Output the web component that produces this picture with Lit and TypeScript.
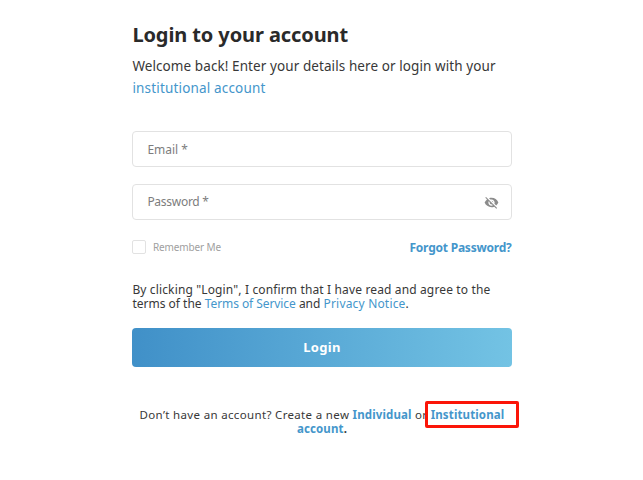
import { LitElement, html, css, svg } from "lit";
import { customElement } from "lit/decorators.js";

const eyeOff = svg`<path d="M12 7c2.76 0 5 2.24 5 5 0 .65-.13 1.26-.36 1.83l2.92 2.92c1.51-1.26 2.7-2.89 3.43-4.75-1.73-4.39-6-7.5-11-7.5-1.4 0-2.74.25-3.98.7l2.16 2.16C10.74 7.13 11.35 7 12 7zM2 4.27l2.28 2.28.46.46C3.08 8.3 1.78 10.02 1 12c1.73 4.39 6 7.5 11 7.5 1.55 0 3.03-.3 4.38-.84l.42.42L19.73 22 21 20.73 3.27 3 2 4.27zM7.53 9.8l1.55 1.55c-.05.21-.08.43-.08.65 0 1.66 1.34 3 3 3 .22 0 .44-.03.65-.08l1.55 1.55c-.67.33-1.41.53-2.2.53-2.76 0-5-2.24-5-5 0-.79.2-1.53.53-2.2zm4.31-.78l3.15 3.15.02-.16c0-1.66-1.34-3-3-3l-.17.01z"/>`;

@customElement("app-root")
export class AppRoot extends LitElement {
  static styles = css`
    :host {
      display: block;
      box-sizing: border-box;
      height: 480px;
      overflow: hidden;
      padding: 21px 0 0 132.4px;
      background: #fff;
      color: #383838;
      font-family: "Noto Sans", "Open Sans", sans-serif;
    }
    .panel { width: 379.2px; }
    h1, p { margin: 0; white-space: nowrap; }
    h1 {
      font-size: 20px;
      line-height: 28px;
      font-weight: 700;
      letter-spacing: -0.1px;
      color: #2a2a2a;
    }
    a { color: #4496cb; text-decoration: none; }
    .intro {
      margin-top: 6px;
      font-size: 13.5px;
      line-height: 22px;
      letter-spacing: 0.085px;
    }
    .intro a { letter-spacing: 0.17px; }
    .field {
      box-sizing: border-box;
      height: 36px;
      border: 1px solid #e2e2e2;
      border-radius: 4px;
      padding: 0 12px 0 14px;
      display: flex;
      align-items: center;
      justify-content: space-between;
      font-size: 12px;
      line-height: 16px;
      color: #7d7d7d;
    }
    .email { margin-top: 32px; padding-top: 1px; }
    .password { margin-top: 17px; letter-spacing: -0.28px; }
    .eye { width: 15px; height: 15px; fill: #8c8c8c; }
    .options {
      margin-top: 19px;
      height: 16px;
      display: flex;
      align-items: center;
      justify-content: space-between;
    }
    .remember {
      display: flex;
      align-items: center;
      gap: 6.5px;
      font-size: 10px;
      letter-spacing: -0.13px;
      color: #a0a0a0;
    }
    .box {
      box-sizing: border-box;
      width: 14px;
      height: 14px;
      border: 1px solid #e2e2e2;
      border-radius: 2px;
    }
    .forgot { font-size: 12px; font-weight: 700; letter-spacing: -0.22px; }
    .terms {
      margin-top: 28px;
      font-size: 12px;
      line-height: 14px;
      letter-spacing: 0.139px;
    }
    .terms .second { letter-spacing: 0; }
    .terms .tos { letter-spacing: -0.07px; }
    .terms .privacy { letter-spacing: 0.18px; }
    .login {
      display: block;
      width: 100%;
      height: 39px;
      margin-top: 17px;
      padding: 0;
      border: 0;
      border-radius: 4px;
      background: linear-gradient(90deg, #4090c8, #73c3e4);
      color: #fff;
      font: 700 13px/39px "Noto Sans", "Open Sans", sans-serif;
      letter-spacing: 0.3px;
    }
    .signup {
      margin-top: 41px;
      font-size: 11.5px;
      line-height: 14px;
      text-align: center;
      letter-spacing: 0.336px;
    }
    .signup a, .signup b { font-weight: 700; letter-spacing: 0.13px; }
    .marked { position: relative; }
    .marked::after {
      content: "";
      position: absolute;
      left: -6px;
      top: -6px;
      width: 88px;
      height: 21px;
      border: 3px solid #fb1508;
      border-radius: 2px;
    }
  `;

  render() {
    return html`
      <main class="panel">
        <h1>Login to your account</h1>
        <p class="intro">Welcome back! Enter your details here or login with your<br /><a>institutional account</a></p>
        <div class="field email"><span>Email *</span></div>
        <div class="field password">
          <span>Password *</span>
          <svg class="eye" viewBox="0 0 24 24">${eyeOff}</svg>
        </div>
        <div class="options">
          <label class="remember"><span class="box"></span>Remember Me</label>
          <a class="forgot">Forgot Password?</a>
        </div>
        <p class="terms">By clicking "Login", I confirm that I have read and agree to the<br /><span class="second">terms of the <a class="tos">Terms of Service</a> and <a class="privacy">Privacy Notice</a>.</span></p>
        <button class="login">Login</button>
        <p class="signup">Don’t have an account? Create a new <a>Individual</a> or <a class="marked">Institutional</a><br /><a>account</a><b>.</b></p>
      </main>
    `;
  }
}
